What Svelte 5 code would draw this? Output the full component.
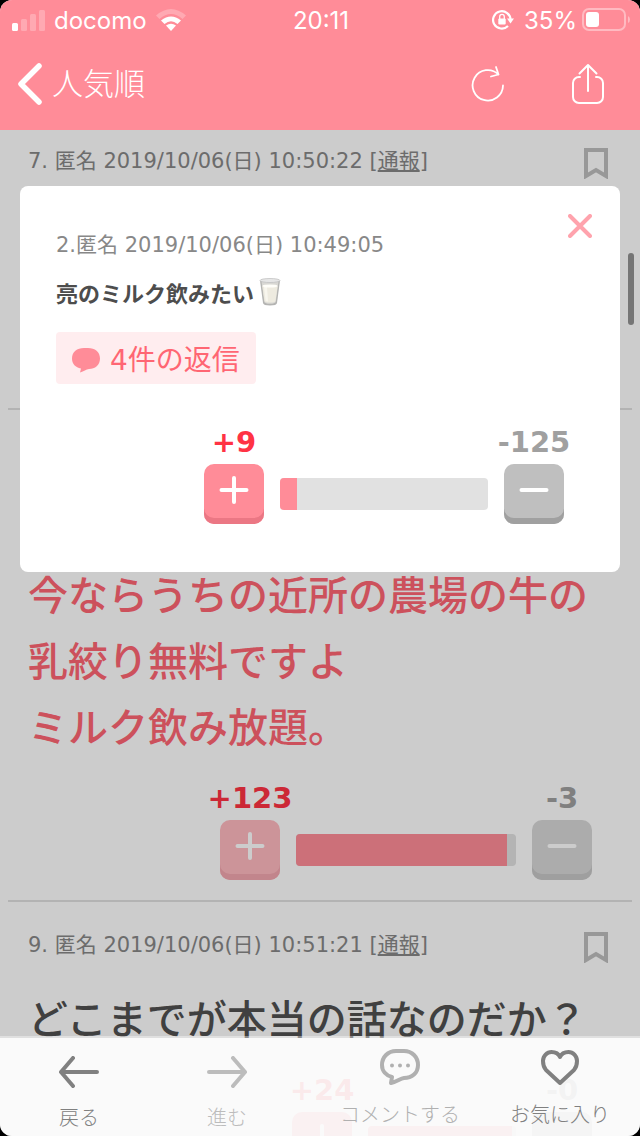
<script lang="ts">
    interface Vote {
        plus: number;
        minus: number;
        percent: number;
        voted?: boolean;
        compact?: boolean;
    }

    interface Post {
        id: number;
        meta?: string;
        text?: string;
        popular?: boolean;
        vote?: Vote;
    }

    const posts: Post[] = [
        { id: 7, meta: "7. 匿名 2019/10/06(日) 10:50:22" },
        {
            id: 8,
            text: "今ならうちの近所の農場の牛の乳絞り無料ですよ\nミルク飲み放題。",
            popular: true,
            vote: { plus: 123, minus: 3, percent: 96, voted: true },
        },
        {
            id: 9,
            meta: "9. 匿名 2019/10/06(日) 10:51:21",
            text: "どこまでが本当の話なのだか？",
            vote: { plus: 24, minus: 0, percent: 97, compact: true },
        },
    ];

    const quoteVote: Vote = { plus: 9, minus: 125, percent: 8 };

    let isOpen = $state(true);
</script>

{#snippet voteView(vote: Vote)}
    <div class="vote" class:voted={vote.voted} class:compact={vote.compact}>
        <div class="side plus">
            <span class="count">+{vote.plus}</span>
            <button class="vote-btn" aria-label="プラス">
                <svg width="30" height="30" viewBox="0 0 30 30">
                    <path d="M2.5 15h25M15 3v24" />
                </svg>
            </button>
        </div>
        <div class="bar"><div class="fill" style="width: {vote.percent}%"></div></div>
        <div class="side minus">
            <span class="count">-{vote.minus}</span>
            <button class="vote-btn" aria-label="マイナス">
                <svg width="30" height="30" viewBox="0 0 30 30">
                    <path d="M2.5 15h25" />
                </svg>
            </button>
        </div>
    </div>
{/snippet}

<div class="screen">
    <header>
        <div class="status">
            <div class="carrier">
                <svg class="signal" width="33" height="21" viewBox="0 0 33 21">
                    <rect y="13" width="6" height="8" rx="1.5" />
                    <g opacity="0.25">
                        <rect x="9" y="9" width="6" height="12" rx="1.5" />
                        <rect x="18" y="4" width="6" height="17" rx="1.5" />
                        <rect x="27" width="6" height="21" rx="1.5" />
                    </g>
                </svg>
                <span>docomo</span>
                <svg class="wifi" width="30" height="22" viewBox="0 0 30 22">
                    <path opacity="0.25" d="M0 6.5Q15-6.500 30 6.500L26.500 10Q15 0 3.500 10Z" />
                    <path d="M5 11.500Q15 3.500 25 11.500L21.500 15Q15 9.500 8.500 15Z" />
                    <path d="M10 16.500Q15 13 20 16.500L15 22Z" />
                </svg>
            </div>
            <span>20:11</span>
            <div class="battery">
                <svg width="22" height="22" viewBox="0 0 22 22">
                    <path d="M18.500 11A8.700 8.700 0 1 0 16 17" fill="none" stroke="#fff" stroke-width="2.200" />
                    <path d="M15 9.500h7l-3.500 5z" />
                    <rect x="6.300" y="9.500" width="7.400" height="6" rx="1" />
                    <path d="M7.700 10V7.700a2.300 2.300 0 0 1 4.600 0V10" fill="none" stroke="#fff" stroke-width="1.300" />
                </svg>
                <span class="percent">35%</span>
                <svg width="48" height="24" viewBox="0 0 48 24">
                    <rect x="1" y="1" width="42" height="21" rx="6" fill="none" stroke="#fff" stroke-width="2" opacity="0.4" />
                    <rect x="4" y="4" width="13" height="15" rx="3" />
                    <path d="M46 8q2 1 2 3.500t-2 3.500z" opacity="0.4" />
                </svg>
            </div>
        </div>
        <nav>
            <a class="back" href="#ranking">
                <svg width="26" height="44" viewBox="0 0 26 44">
                    <path d="M22 4L4 22l18 18" stroke-width="5.500" />
                </svg>
                <span>人気順</span>
            </a>
            <div class="actions">
                <button aria-label="更新">
                    <svg width="34" height="38" viewBox="0 0 34 38">
                        <path d="M32 20.500A15.200 15.200 0 1 1 27.500 9.500M25 2l2.500 7.500-7.500 2" stroke-width="1.800" />
                    </svg>
                </button>
                <button aria-label="共有">
                    <svg width="34" height="42" viewBox="0 0 34 42">
                        <path d="M9 14H8a6 6 0 0 0-6 6v14a6 6 0 0 0 6 6h18a6 6 0 0 0 6-6V20a6 6 0 0 0-6-6h-1M17 28V2M8.500 10.500L17 2l8.500 8.500" stroke-width="2" />
                    </svg>
                </button>
            </div>
        </nav>
    </header>

    <main>
        <div class="posts">
            {#each posts as post (post.id)}
                <article>
                    {#if post.meta}
                        <div class="head">
                            <div class="meta">{post.meta} [<a href="#report">通報</a>]</div>
                            <button class="bookmark" aria-label="ブックマーク">
                                <svg width="24" height="31" viewBox="0 0 24 31">
                                    <path d="M2 2h20v26l-10-6-10 6z" />
                                </svg>
                            </button>
                        </div>
                    {/if}
                    {#if post.text}
                        <p class="text" class:popular={post.popular}>{post.text}</p>
                    {/if}
                    {#if post.vote}
                        {@render voteView(post.vote)}
                    {/if}
                </article>
            {/each}
        </div>

        <div class="overlay"></div>
        <div class="scrollbar"></div>

        {#if isOpen}
            <section class="modal">
                <button class="close" aria-label="閉じる" onclick={() => (isOpen = false)}>
                    <svg width="24" height="24" viewBox="0 0 24 24">
                        <path d="M2 2l20 20M22 2L2 22" />
                    </svg>
                </button>
                <div class="meta">2.匿名 2019/10/06(日) 10:49:05</div>
                <p class="quote">
                    亮のミルク飲みたい
                    <svg width="22" height="28" viewBox="0 0 22 28">
                        <path d="M1 2.500L4 25q.4 2.500 7 2.500t7-2.500L21 2.500z" fill="#b4b4b2" />
                        <path d="M2.500 3.500L5.300 24q.7 1.800 5.700 1.800T16.700 24L19.500 3.500z" fill="#d9d8d4" />
                        <path d="M3.400 8L5.500 23q.6 1.600 5.500 1.600t5.500-1.600L18.600 8z" fill="#eeebe0" />
                        <path d="M5 9l1.700 14 2.300.6L8 9z" fill="#f8f6ee" />
                        <ellipse cx="11" cy="8" rx="7.600" ry="1.600" fill="#fffef9" />
                        <ellipse cx="11" cy="2.500" rx="10" ry="2" fill="#e6e6e6" stroke="#c2c2c2" stroke-width="0.800" />
                    </svg>
                </p>
                <button class="reply">
                    <svg width="28" height="25" viewBox="0 0 28 25">
                        <path d="M12 0h4c7 0 12 4 12 10.500C28 17 23 21 17 21c-3 .3-5 2.500-9 3.500l1-4C3.500 19.500 0 16 0 10.500 0 4 5 0 12 0z" />
                    </svg>
                    4件の返信
                </button>
                {@render voteView(quoteVote)}
            </section>
        {/if}

        <div class="toolbar">
            <button>
                <svg width="40" height="32" viewBox="0 0 40 32">
                    <path d="M38 16H2M14 2L2 16l12 14" />
                </svg>
                戻る
            </button>
            <button class="inactive">
                <svg width="40" height="32" viewBox="0 0 40 32">
                    <path d="M2 16h36M26 2l12 14-12 14" />
                </svg>
                進む
            </button>
            <button class="raised comment">
                <svg width="40" height="36" viewBox="0 0 40 36">
                    <path d="M16 2h8c8 0 14 6 14 14s-6 13-14 13c-4 .5-7 4-13 5l1-6C6 26.500 2 22 2 16 2 8 8 2 16 2z" />
                    <g class="dots">
                        <circle cx="12" cy="16.500" r="2" />
                        <circle cx="20" cy="16.500" r="2" />
                        <circle cx="28" cy="16.500" r="2" />
                    </g>
                </svg>
                コメントする
            </button>
            <button class="raised">
                <svg width="40" height="36" viewBox="0 0 40 36">
                    <path d="M20 34L6 21C3 17.500 3 14.500 3 12c0-5 4-9 8.500-9 4 0 7 1.500 8.500 5C21.500 4.500 24.500 3 28.500 3c4.500 0 8.500 4 8.500 9 0 2.500 0 5.500-3 9z" />
                </svg>
                お気に入り
            </button>
        </div>
    </main>
</div>

<style>
    :global(body) {
        background: #000;
    }

    .screen {
        display: flex;
        flex-direction: column;
        height: 100vh;
        border-radius: 12px;
        overflow: hidden;
        background: #fff;
        font-family: "DejaVu Sans", "Noto Sans CJK JP", sans-serif;

        & button {
            padding: 0;
            border: none;
            background: none;
            font-family: inherit;
            cursor: pointer;
        }

        & svg {
            display: block;
            flex: none;
        }

        & p {
            margin: 0;
        }
    }

    header {
        background: #ff8c98;
        color: #fff;
    }

    .status {
        display: grid;
        grid-template-columns: 1fr auto 1fr;
        align-items: center;
        height: 40px;
        padding: 0 10px 0 12px;
        font-family: Inter, sans-serif;
        font-size: 24px;
        font-weight: 400;

        & svg {
            fill: #fff;
        }
    }

    .carrier {
        display: flex;
        align-items: center;
        gap: 9px;
    }

    .battery {
        display: flex;
        align-items: center;
        justify-content: flex-end;
        gap: 5px;

        & .percent {
            margin-left: 5px;
        }
    }

    nav {
        display: flex;
        align-items: center;
        justify-content: space-between;
        height: 90px;
        padding: 0 35px 2px 17px;
        box-sizing: border-box;

        & svg {
            fill: none;
            stroke: #fff;
            stroke-linecap: round;
            stroke-linejoin: round;
        }
    }

    .back {
        display: flex;
        align-items: center;
        gap: 9px;
        color: #fff;
        font-family: "Noto Sans CJK JP", sans-serif;
        font-size: 31px;
        font-weight: 300;
        line-height: 40px;
        text-decoration: none;

        & span {
            padding-bottom: 4px;
        }
    }

    .actions {
        display: flex;
        align-items: center;
        gap: 66px;
    }

    main {
        position: relative;
        flex: 1;
        min-height: 0;
        overflow: hidden;
    }

    /* the list is scrolled a little under the header */
    .posts {
        margin-top: -12px;
    }

    article {
        display: flex;
        flex-direction: column;
        box-sizing: border-box;
        margin: 0 8px;
        padding: 30px 24px 20px 20px;
        border-bottom: 2px solid #e0e0e0;

        &:nth-child(1) {
            min-height: 292px;
        }

        &:nth-child(2) {
            min-height: 492px;
            justify-content: flex-end;
        }
    }

    .head {
        display: flex;
        align-items: flex-start;
        justify-content: space-between;
        margin-bottom: 21px;
    }

    .meta {
        color: #888;
        font-size: 21px;
        line-height: 26px;

        & a {
            color: inherit;
        }
    }

    .bookmark svg {
        fill: none;
        stroke: #bfbfbf;
        stroke-width: 4;
    }

    .text {
        color: #505050;
        font-family: "Noto Sans CJK JP", sans-serif;
        font-size: 40px;
        font-weight: 500;
        line-height: 66px;
        white-space: pre-line;

        &.popular {
            color: #ff6673;
        }
    }

    .vote {
        display: flex;
        align-items: flex-end;
        gap: 16px;
        margin: 18px 16px 0 192px;

        &.compact {
            margin-left: 264px;
        }
    }

    .side {
        display: flex;
        flex-direction: column;
        align-items: center;
        width: 60px;
    }

    .count {
        color: #a0a0a0;
        font-size: 29px;
        font-weight: bold;
        line-height: 44px;
        white-space: nowrap;

        .plus & {
            color: #ff3344;
        }
    }

    .screen .vote-btn {
        display: flex;
        justify-content: center;
        width: 60px;
        height: 60px;
        padding-top: 11px;
        border-radius: 10px;
        background: #bfbfbf;
        box-shadow: inset 0 -6px #a0a0a0;

        & svg {
            fill: none;
            stroke: #fff;
            stroke-width: 4;
            stroke-linecap: round;
        }

        .plus & {
            background: #ff8c98;
            box-shadow: inset 0 -6px #eb7784;
        }

        .voted .minus & {
            background: #d8d8d8;
            box-shadow: inset 0 -6px #c7c7c7;
        }

        .voted .plus & {
            background: #ffb9c0;
            box-shadow: inset 0 -6px #f3a7af;
        }
    }

    .bar {
        flex: 1;
        height: 32px;
        margin-bottom: 14px;
        border-radius: 4px;
        background: #e1e1e1;
        overflow: hidden;
    }

    .fill {
        height: 100%;
        background: #ff8c98;
    }

    .overlay {
        position: absolute;
        inset: 0;
        background: rgba(0, 0, 0, 0.2);
    }

    .scrollbar {
        position: absolute;
        top: 123px;
        right: 6px;
        width: 6px;
        height: 72px;
        border-radius: 3px;
        background: #757575;
    }

    .modal {
        position: absolute;
        top: 56px;
        left: 20px;
        right: 20px;
        padding: 46px 40px 48px 36px;
        border-radius: 8px;
        background: #fff;

        & .vote {
            margin: 36px 16px 0 148px;
        }
    }

    .close {
        position: absolute;
        top: 28px;
        right: 28px;

        & svg {
            fill: none;
            stroke: #ffa3ad;
            stroke-width: 4;
            stroke-linecap: round;
        }
    }

    .quote {
        display: flex;
        align-items: center;
        gap: 5px;
        padding-top: 12px;
        color: #4d4d4d;
        font-family: "Noto Sans CJK JP", sans-serif;
        font-size: 22px;
        font-weight: bold;
        line-height: 44px;
    }

    .screen .reply {
        display: flex;
        align-items: center;
        gap: 10px;
        height: 52px;
        margin-top: 18px;
        padding: 0 16px;
        border-radius: 4px;
        background: #ffedef;
        color: #ff6673;
        font-size: 28px;

        & svg {
            margin-top: 4px;
            fill: #ff8c98;
        }
    }

    .toolbar {
        position: absolute;
        bottom: 0;
        left: 0;
        right: 0;
        display: grid;
        grid-template-columns: 158fr 138fr 208fr 112fr;
        height: 98px;
        padding-right: 24px;
        border-top: 2px solid rgba(255, 255, 255, 0.4);
        background: rgba(255, 255, 255, 0.9);
        background-clip: padding-box;

        & button {
            display: flex;
            flex-direction: column;
            align-items: center;
            gap: 14px;
            padding-top: 18px;
            color: #808080;
            font-family: "Noto Sans CJK JP", sans-serif;
            font-size: 20px;
            font-weight: 300;
            line-height: 30px;
            white-space: nowrap;
        }

        & .raised {
            padding-top: 11px;
        }

        & .inactive {
            color: #bcbcbc;
        }

        & .comment {
            color: #b0b0b0;
        }

        & svg {
            fill: none;
            stroke: currentColor;
            stroke-width: 4;
            stroke-linecap: round;
            stroke-linejoin: round;
        }

        & .dots {
            fill: currentColor;
            stroke: none;
        }
    }
</style>
